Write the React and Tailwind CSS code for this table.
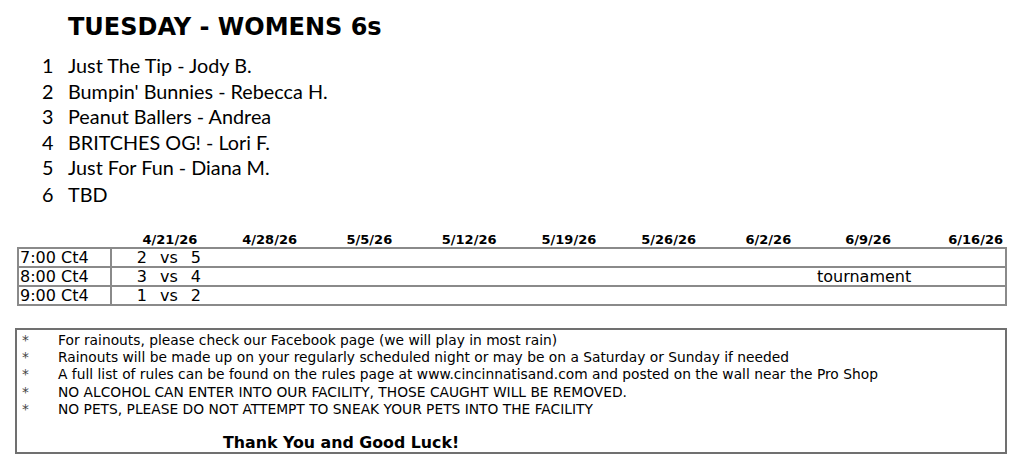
const teams = [
  ["1", "Just The Tip - Jody B."],
  ["2", "Bumpin' Bunnies - Rebecca H."],
  ["3", "Peanut Ballers - Andrea"],
  ["4", "BRITCHES OG! - Lori F."],
  ["5", "Just For Fun - Diana M."],
];

const dates = ["4/21/26", "4/28/26", "5/5/26", "5/12/26", "5/19/26", "5/26/26", "6/2/26", "6/9/26", "6/16/26"];

const slots = [
  { time: "7:00 Ct4", game: ["2", "5"] },
  { time: "8:00 Ct4", game: ["3", "4"], note: "tournament" },
  { time: "9:00 Ct4", game: ["1", "2"] },
];

const notes = [
  "For rainouts, please check our Facebook page (we will play in most rain)",
  "Rainouts will be made up on your regularly scheduled night or may be on a Saturday or Sunday if needed",
  "A full list of rules can be found on the rules page at www.cincinnatisand.com and posted on the wall near the Pro Shop",
  "NO ALCOHOL CAN ENTER INTO OUR FACILITY, THOSE CAUGHT WILL BE REMOVED.",
  "NO PETS, PLEASE DO NOT ATTEMPT TO SNEAK YOUR PETS INTO THE FACILITY",
];

// same column template for header and body rows
const cols = "grid grid-cols-[93px_10px_repeat(8,99.75px)_1fr]";

export default function App() {
  return (
    <div className="h-[464px] w-[1015px] overflow-hidden bg-white text-black">
      <h1 className="pl-[68px] pt-[12px] font-['DejaVu_Sans',sans-serif] text-[24px] font-bold leading-[30px]">
        TUESDAY - WOMENS 6s
      </h1>

      <ul className="mt-[11px] pl-[42px] font-['Lato',sans-serif] text-[19.8px] leading-[25.5px]">
        {teams.map(([n, name]) => (
          <li key={n} className="flex">
            <span className="w-[26px]">{n}</span>
            <span>{name}</span>
          </li>
        ))}
        <li className="mt-[1px] flex">
          <span className="w-[26px]">6</span>
          <span>TBD</span>
        </li>
      </ul>

      {/* schedule */}
      <div className="ml-[17px] mt-[26px] w-[990px] font-['DejaVu_Sans',sans-serif]">
        <div className={`${cols} text-[13px] font-bold leading-[14px]`}>
          <span />
          <span />
          {dates.map((d, i) => (
            <span key={d} className={i === 8 ? "pr-[4px] text-right" : "text-center"}>
              {d}
            </span>
          ))}
        </div>
        <div className="border-2 border-[#8a8a8a] text-[16px] leading-[17px]">
          {slots.map((s, i) => (
            <div key={s.time} className={`${cols} ${i > 0 ? "border-t-2 border-[#8a8a8a]" : ""}`}>
              <span className="border-r-2 border-[#8a8a8a] pl-[1px]">{s.time}</span>
              <span />
              <span className="flex justify-center gap-[13px] pr-[6px]">
                <span>{s.game[0]}</span>
                <span>vs</span>
                <span>{s.game[1]}</span>
              </span>
              {dates.slice(1).map((d, j) => (
                <span key={d} className="text-center">
                  {s.note && j === 6 ? <span className="-ml-[12px]">{s.note}</span> : null}
                </span>
              ))}
            </div>
          ))}
        </div>
      </div>

      {/* notes */}
      <div className="ml-[15px] mt-[22px] h-[126px] w-[992px] border-2 border-[#707070] font-['DejaVu_Sans',sans-serif] text-[13.8px] leading-[17.2px]">
        <ul className="pt-[2px]">
          {notes.map((t) => (
            <li key={t} className="flex">
              <span className="w-[41px] pl-[5px] text-[#444]">*</span>
              <span>{t}</span>
            </li>
          ))}
        </ul>
        <p className="mt-[16px] pl-[206px] text-[15.8px] font-bold leading-[18px]">Thank You and Good Luck!</p>
      </div>
    </div>
  );
}
